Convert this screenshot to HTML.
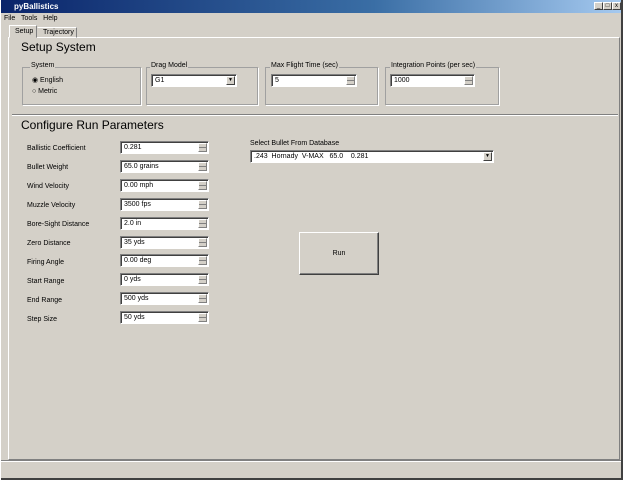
<!DOCTYPE html><html><head><style>
*{margin:0;padding:0;box-sizing:border-box}
body{width:623px;height:480px;background:#d4d0c8;font-family:"Liberation Sans",sans-serif;font-size:7px;color:#000;position:relative;overflow:hidden}
.a{position:absolute;white-space:nowrap}
.title{left:0;top:0;width:623px;height:13px;background:linear-gradient(90deg,#0a246a,#3a6ea5 60%,#a6caf0);color:#fff;font-weight:bold;font-size:8px;padding:2px 0 0 14px}
.wb{top:2px;width:9px;height:8px;background:#d4d0c8;border:1px solid;border-color:#fff #404040 #404040 #fff;font-size:6px;text-align:center;line-height:6px}
.grp{border:1px solid #a0a0a0;box-shadow:1px 1px 0 #fff}
.gl{background:#d4d0c8;padding:0 1px}
.box{background:#fff;border:1px solid;border-color:#808080 #fff #fff #808080;box-shadow:inset 1px 1px 0 #404040;padding:0 3px;height:13px;font-size:7px;line-height:11px}
.sp{position:absolute;right:1px;top:1px;width:9px;height:9px;background:#d4d0c8;border:1px solid;border-color:#fff #808080 #808080 #fff}
.sp:after{content:"";position:absolute;left:0;right:0;top:3px;height:1px;background:#808080}
.dd{position:absolute;right:1px;top:1px;width:9px;height:9px;background:#d4d0c8;border:1px solid;border-color:#fff #404040 #404040 #fff;font-size:5px;text-align:center;line-height:7px}
.lbl{left:27px;font-size:7px}
h1{position:absolute;font-weight:normal;font-size:12px}
</style></head><body>
<div class="a title">pyBallistics</div>
<div class="a wb" style="left:594px">_</div><div class="a wb" style="left:603px">□</div><div class="a wb" style="left:612px">x</div>
<div class="a" style="left:4px;top:15px">File&nbsp;&nbsp; Tools&nbsp;&nbsp; Help</div>
<div class="a" style="left:8px;top:37px;width:612px;height:423px;border:1px solid;border-color:#fff #808080 #808080 #fff"></div>
<div class="a" style="left:9px;top:25px;width:28px;height:13px;border:1px solid;border-color:#fff #808080 transparent #fff;background:#d4d0c8;padding:2px 0 0 5px">Setup</div>
<div class="a" style="left:37px;top:27px;width:40px;height:11px;border:1px solid;border-color:#fff #808080 transparent transparent;padding:1px 0 0 5px">Trajectory</div>
<h1 style="left:21px;top:40px">Setup System</h1>
<div class="a grp" style="left:22px;top:67px;width:119px;height:38px"></div>
<div class="a gl" style="left:30px;top:62px">System</div>
<div class="a" style="left:32px;top:76px">◉ English</div>
<div class="a" style="left:32px;top:88px">○ Metric</div>
<div class="a grp" style="left:146px;top:67px;width:112px;height:38px"></div>
<div class="a gl" style="left:150px;top:62px">Drag Model</div>
<div class="a box" style="left:151px;top:74px;width:86px">G1<span class="dd">▼</span></div>
<div class="a grp" style="left:265px;top:67px;width:113px;height:38px"></div>
<div class="a gl" style="left:270px;top:62px">Max Flight Time (sec)</div>
<div class="a box" style="left:271px;top:74px;width:86px">5<span class="sp"></span></div>
<div class="a grp" style="left:385px;top:67px;width:114px;height:38px"></div>
<div class="a gl" style="left:390px;top:62px">Integration Points (per sec)</div>
<div class="a box" style="left:390px;top:74px;width:85px">1000<span class="sp"></span></div>
<div class="a" style="left:12px;top:114px;width:606px;height:2px;border-top:1px solid #808080;border-bottom:1px solid #fff"></div>
<h1 style="left:21px;top:118px">Configure Run Parameters</h1>
<div class="a lbl" style="top:145px">Ballistic Coefficient</div><div class="a box" style="left:120px;top:141px;width:89px">0.281<span class="sp"></span></div>
<div class="a lbl" style="top:164px">Bullet Weight</div><div class="a box" style="left:120px;top:160px;width:89px">65.0 grains<span class="sp"></span></div>
<div class="a lbl" style="top:183px">Wind Velocity</div><div class="a box" style="left:120px;top:179px;width:89px">0.00 mph<span class="sp"></span></div>
<div class="a lbl" style="top:202px">Muzzle Velocity</div><div class="a box" style="left:120px;top:198px;width:89px">3500 fps<span class="sp"></span></div>
<div class="a lbl" style="top:221px">Bore-Sight Distance</div><div class="a box" style="left:120px;top:217px;width:89px">2.0 in<span class="sp"></span></div>
<div class="a lbl" style="top:240px">Zero Distance</div><div class="a box" style="left:120px;top:236px;width:89px">35 yds<span class="sp"></span></div>
<div class="a lbl" style="top:259px">Firing Angle</div><div class="a box" style="left:120px;top:254px;width:89px">0.00 deg<span class="sp"></span></div>
<div class="a lbl" style="top:278px">Start Range</div><div class="a box" style="left:120px;top:273px;width:89px">0 yds<span class="sp"></span></div>
<div class="a lbl" style="top:297px">End Range</div><div class="a box" style="left:120px;top:292px;width:89px">500 yds<span class="sp"></span></div>
<div class="a lbl" style="top:316px">Step Size</div><div class="a box" style="left:120px;top:311px;width:89px">50 yds<span class="sp"></span></div>
<div class="a" style="left:250px;top:140px">Select Bullet From Database</div>
<div class="a box" style="left:250px;top:150px;width:244px">.243&nbsp; Hornady&nbsp; V-MAX&nbsp;&nbsp; 65.0&nbsp;&nbsp;&nbsp; 0.281<span class="dd">▼</span></div>
<div class="a" style="left:299px;top:232px;width:80px;height:43px;border:1px solid;border-color:#fff #404040 #404040 #fff;box-shadow:inset -1px -1px 0 #808080;text-align:center;line-height:41px">Run</div>
<div class="a" style="left:0;top:460px;width:623px;height:2px;border-top:1px solid #808080;border-bottom:1px solid #fff"></div>
<div class="a" style="left:0;top:478px;width:623px;height:2px;background:#404040"></div>
<div class="a" style="left:0;top:0;width:1px;height:480px;background:#fff"></div>
<div class="a" style="left:621px;top:0;width:2px;height:480px;background:#404040"></div>
</body></html>
